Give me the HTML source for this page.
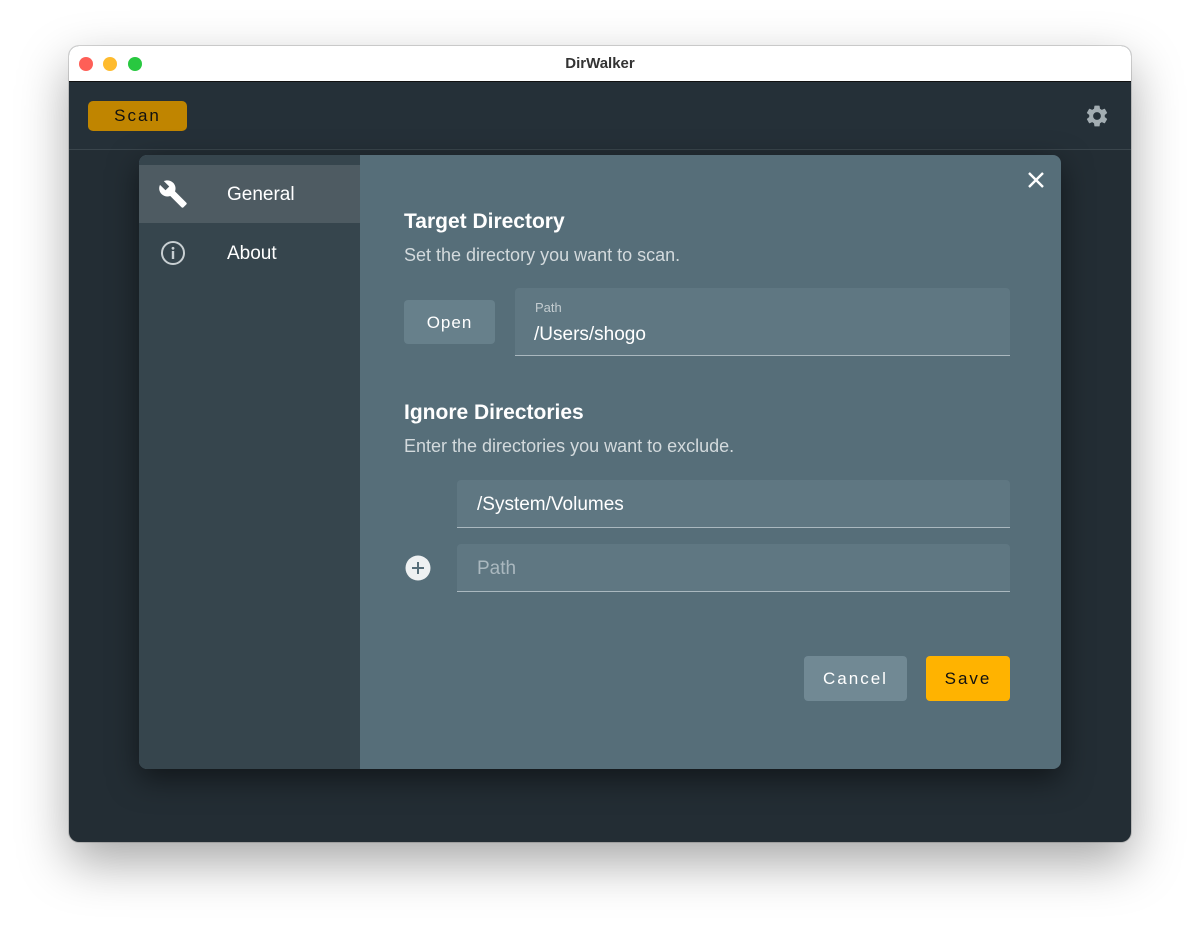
<!DOCTYPE html>
<html><head><style>
*{margin:0;padding:0;box-sizing:border-box}
body{width:1200px;height:934px;background:#fff;font-family:"Liberation Sans",sans-serif;position:relative;overflow:hidden}
.win{position:absolute;left:69px;top:46px;width:1062px;height:796px;border-radius:10px;overflow:hidden;box-shadow:0 20px 50px rgba(0,0,0,.35),0 0 0 1px rgba(0,0,0,.15);background:#232d34}
.tb{height:36px;background:#fff;border-bottom:1px solid #111;position:relative;text-align:center;font-weight:bold;font-size:15px;line-height:36px;color:#333}
.dot{position:absolute;top:11px;width:14px;height:14px;border-radius:50%}
.bar{position:absolute;top:36px;left:0;right:0;height:68px;background:#253038;border-bottom:1px solid #3a454c}
.scan{position:absolute;left:19px;top:19px;width:99px;height:30px;background:#c08500;border-radius:5px;text-align:center;line-height:30px;font-size:17px;letter-spacing:2px;color:#111}
.abs{position:absolute}
.dlg{position:absolute;left:70px;top:109px;width:922px;height:614px;border-radius:8px;overflow:hidden;background:#566e79;box-shadow:0 10px 30px rgba(0,0,0,.5)}
.side{position:absolute;left:0;top:0;width:221px;height:100%;background:#36454d}
.sel{position:absolute;left:0;top:10px;width:221px;height:58px;background:#4e5b62}
.t{position:absolute;color:#fff;white-space:nowrap}
.inp{position:absolute;background:#5f7782;border-bottom:1px solid #aab8bf;border-radius:4px 4px 0 0}
</style></head><body>
<div class="win">
 <div class="tb">DirWalker
  <div class="dot" style="left:10px;background:#fe5f57"></div>
  <div class="dot" style="left:34px;background:#febb2e"></div>
  <div class="dot" style="left:59px;background:#28c840"></div>
 </div>
 <div class="bar">
  <div class="scan">Scan</div>
  <svg class="abs" style="left:1015px;top:21px" width="26" height="26" viewBox="0 0 24 24"><path fill="#a3adb2" d="M19.14 12.94c.04-.3.06-.61.06-.94 0-.32-.02-.64-.07-.94l2.03-1.58a.49.49 0 0 0 .12-.61l-1.920-3.32a.49.49 0 0 0-.59-.22l-2.39.96c-.5-.38-1.03-.7-1.62-.94l-.36-2.54a.48.48 0 0 0-.48-.41h-3.84c-.24 0-.43.17-.47.41l-.36 2.54c-.59.24-1.13.57-1.62.94l-2.39-.96a.49.49 0 0 0-.59.22L2.74 8.87c-.12.21-.08.47.12.61l2.03 1.58c-.05.3-.09.63-.09.94s.02.64.07.94l-2.030 1.58a.49.49 0 0 0-.12.61l1.92 3.32c.12.22.37.29.59.22l2.39-.96c.5.38 1.03.7 1.62.94l.36 2.54c.05.24.24.41.48.41h3.84c.24 0 .44-.17.47-.41l.36-2.54c.59-.24 1.13-.56 1.62-.94l2.39.96c.22.08.47 0 .59-.22l1.92-3.32c.12-.22.07-.47-.12-.61l-2.01-1.58zM12 15.6A3.6 3.6 0 1 1 12 8.4a3.6 3.6 0 0 1 0 7.2z"/></svg>
 </div>
 <div class="dlg">
  <div class="side">
   <div class="sel"></div>
   <svg class="abs" style="left:19px;top:24px" width="30" height="30" viewBox="0 0 24 24"><path fill="#fff" d="M22.7 19l-9.1-9.1c.9-2.3.4-5-1.5-6.9-2-2-5-2.4-7.4-1.3L9 6 6 9 1.6 4.7C.4 7.1.9 10.1 2.9 12.1c1.9 1.9 4.6 2.4 6.9 1.5l9.1 9.1c.4.4 1 .4 1.4 0l2.3-2.3c.5-.4.5-1.1.1-1.4z"/></svg>
   <div class="t" style="left:88px;top:29px;font-size:19px">General</div>
   <svg class="abs" style="left:21px;top:85px" width="26" height="26" viewBox="0 0 26 26"><circle cx="13" cy="13" r="11" fill="none" stroke="#c8cfd2" stroke-width="2"/><circle cx="13" cy="8.3" r="1.4" fill="#c8cfd2"/><rect x="11.8" y="11" width="2.4" height="8" fill="#c8cfd2"/></svg>
   <div class="t" style="left:88px;top:88px;font-size:19px">About</div>
  </div>
  <svg class="abs" style="left:888px;top:16px" width="18" height="18" viewBox="0 0 18 18"><path d="M2 2L16 16M16 2L2 16" stroke="#fff" stroke-width="2.4"/></svg>
  <div class="t" style="left:265px;top:55px;font-size:21px;font-weight:bold">Target Directory</div>
  <div class="t" style="left:265px;top:90px;font-size:18px;color:#d3dadd">Set the directory you want to scan.</div>
  <div class="abs" style="left:265px;top:145px;width:91px;height:44px;background:#67808b;border-radius:4px;color:#fff;font-size:17px;letter-spacing:1px;text-align:center;line-height:46px">Open</div>
  <div class="inp" style="left:376px;top:133px;width:495px;height:68px"></div>
  <div class="t" style="left:396px;top:145px;font-size:13px;color:#c3ccd0">Path</div>
  <div class="t" style="left:395px;top:169px;font-size:19px">/Users/shogo</div>
  <div class="t" style="left:265px;top:246px;font-size:21px;font-weight:bold">Ignore Directories</div>
  <div class="t" style="left:265px;top:281px;font-size:18px;color:#d3dadd">Enter the directories you want to exclude.</div>
  <div class="inp" style="left:318px;top:325px;width:553px;height:48px"></div>
  <div class="t" style="left:338px;top:339px;font-size:19px">/System/Volumes</div>
  <svg class="abs" style="left:266px;top:400px" width="26" height="26" viewBox="0 0 26 26"><circle cx="13" cy="13" r="12.5" fill="#eef1f2"/><path d="M13 7v12M7 13h12" stroke="#566e79" stroke-width="2"/></svg>
  <div class="inp" style="left:318px;top:389px;width:553px;height:48px"></div>
  <div class="t" style="left:338px;top:403px;font-size:19px;color:#aab8bf">Path</div>
  <div class="abs" style="left:665px;top:501px;width:103px;height:45px;background:#718994;border-radius:4px;color:#fff;font-size:17px;letter-spacing:2px;text-align:center;line-height:45px">Cancel</div>
  <div class="abs" style="left:787px;top:501px;width:84px;height:45px;background:#ffb300;border-radius:4px;color:#111;font-size:17px;letter-spacing:2px;text-align:center;line-height:45px">Save</div>
 </div>
</div>
</body></html>
